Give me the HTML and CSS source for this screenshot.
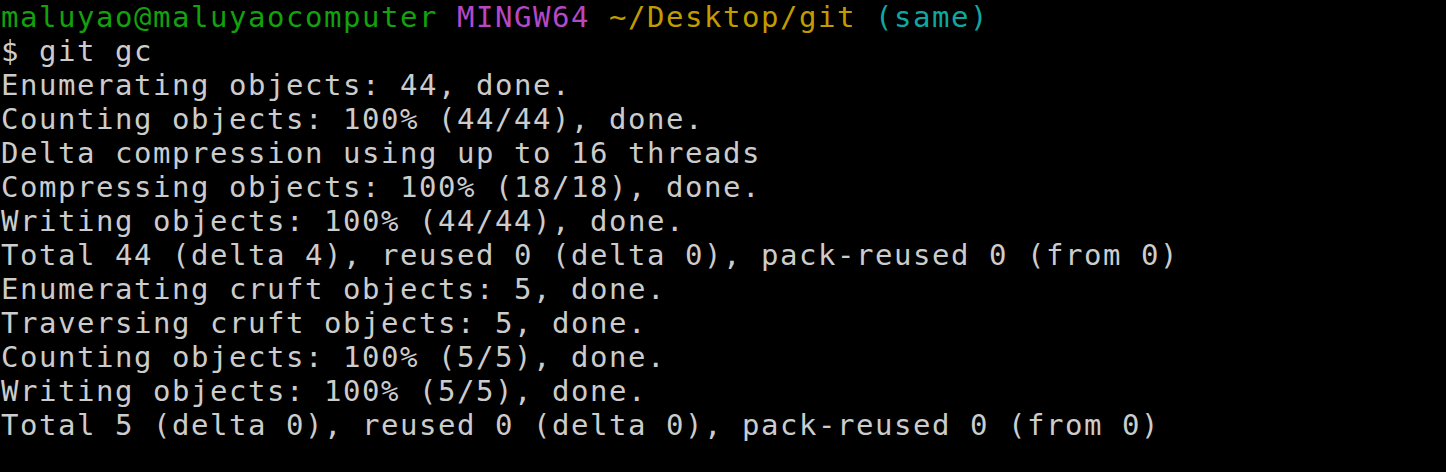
FILE: index.html
```html
<!DOCTYPE html>
<html lang="en">
<head>
<meta charset="utf-8">
<title>MINGW64 terminal</title>
<link rel="stylesheet" href="styles.css">
</head>
<body>
<div class="term">
<div class="line"><span class="c-green">maluyao@maluyaocomputer</span> <span class="c-magenta">MINGW64</span> <span class="c-yellow">~/Desktop/git</span> <span class="c-cyan">(same)</span></div>
<div class="line">$ git gc</div>
<div class="line">Enumerating objects: 44, done.</div>
<div class="line">Counting objects: 100% (44/44), done.</div>
<div class="line">Delta compression using up to 16 threads</div>
<div class="line">Compressing objects: 100% (18/18), done.</div>
<div class="line">Writing objects: 100% (44/44), done.</div>
<div class="line">Total 44 (delta 4), reused 0 (delta 0), pack-reused 0 (from 0)</div>
<div class="line">Enumerating cruft objects: 5, done.</div>
<div class="line">Traversing cruft objects: 5, done.</div>
<div class="line">Counting objects: 100% (5/5), done.</div>
<div class="line">Writing objects: 100% (5/5), done.</div>
<div class="line">Total 5 (delta 0), reused 0 (delta 0), pack-reused 0 (from 0)</div>
</div>
</body>
</html>
```
FILE: styles.css
```css
html, body {
  margin: 0;
  padding: 0;
  background: #000000;
}
body {
  width: 1446px;
  height: 472px;
  overflow: hidden;
}
.term {
  margin: 0;
  padding: 0 0 0 1px;
  font-family: "DejaVu Sans Mono", "Liberation Mono", monospace;
  font-size: 29px;
  letter-spacing: 1.54px;
  line-height: 34px;
  color: #cccccc;
}
.line {
  white-space: pre;
  height: 34px;
}
.c-green { color: #13a10e; }
.c-magenta { color: #b648c6; }
.c-yellow { color: #c19c00; }
.c-cyan { color: #0fa8a0; }
```
